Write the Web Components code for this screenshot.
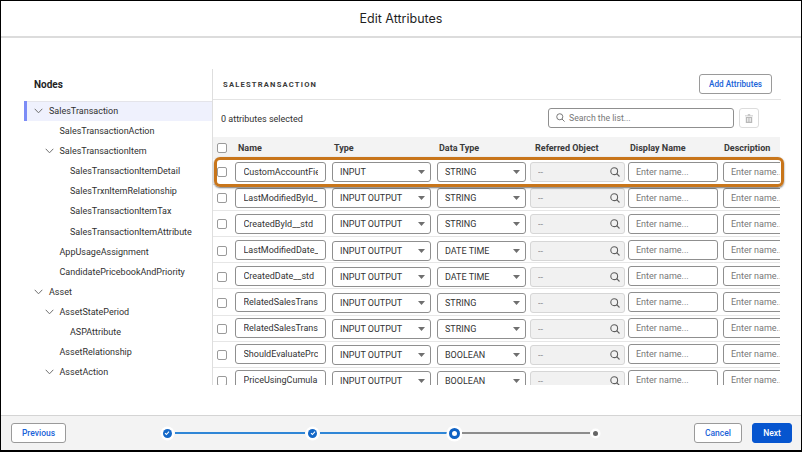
<!DOCTYPE html>
<html lang="en"><head><meta charset="utf-8"><title>Edit Attributes</title>
<style>html,body{margin:0;padding:0;background:#fff}body{font-family:Inter,"Liberation Sans",sans-serif}</style></head>
<body>
<edit-app></edit-app>
<template id="t-app">
<style>
:host{display:flex;flex-direction:column;width:802px;height:452px;box-sizing:border-box;border:solid #000;border-width:1px 1px 2px 1px;background:#fff;color:#2e2e2e;font:9px Roboto,"Liberation Sans",sans-serif;overflow:hidden}
header{height:35px;flex:none;display:flex;align-items:center;justify-content:center;font:12.5px Inter,sans-serif;color:#1f1f1f;border-bottom:2px solid #dcdcdc}
main{flex:1;min-height:0;display:flex;padding:31px 21px 30px 23px}
</style>
<header>Edit Attributes</header>
<main><node-tree></node-tree><attr-panel></attr-panel></main>
<wizard-footer></wizard-footer>
</template>
<template id="t-tree">
<style>
:host{display:block;width:188px;height:316px;flex:none;overflow:hidden}
h2{margin:0;height:32px;padding:10px 0 0 10px;box-sizing:border-box;font-size:10px;font-weight:700;color:#1f1f1f}
</style>
<h2>Nodes</h2><div id="r"></div>
</template>
<template id="t-row">
<style>
:host{display:flex;align-items:center;height:20.08px;box-sizing:border-box;font-size:9px;color:#303030;white-space:nowrap}
:host([selected]){background:#eff1fd;border-left:3px solid #7c8cf6;box-shadow:inset 0 1px 0 #e4e4ea}
svg{width:9px;height:6px;flex:none;fill:none;stroke:#6f6f6f;stroke-width:1}
</style>
<span id="pad"></span><svg id="c" viewBox="0 0 9 6"><path d="M.7.8 4.5 4.8 8.3.8"/></svg><span id="g" style="width:6px;flex:none"></span><slot></slot>
</template>
<template id="t-panel">
<style>
:host{display:flex;flex-direction:column;width:568px;flex:none;border-left:1px solid #dedede;position:relative;height:316px}
.top{height:31px;flex:none;box-sizing:border-box;border-bottom:1px solid #e4e4e4;display:flex;align-items:center;justify-content:space-between;padding:0 9px 0 10px}
.t{font-size:7.6px;font-weight:700;letter-spacing:1.2px;color:#3a3a3a}
.bar{height:37px;flex:none;display:flex;align-items:center;padding:0 0 0 8px;font-size:9px;color:#303030}
.sp{flex:1}
.search{width:186px;height:20px;margin:-2px 5px 0 0;box-sizing:border-box;border:1px solid #8f8f8f;border-radius:3px;display:flex;align-items:center;gap:4px;padding-left:7px;color:#777;font-size:8.7px}
.trash{width:20px;height:20px;margin:-1px 22px 0 0;box-sizing:border-box;border:1px solid #dcdcdc;border-radius:3px;display:flex;align-items:center;justify-content:center}
svg{display:block}
.table{flex:1;min-height:0;overflow:hidden;width:567px}
</style>
<div class="top"><span class="t">SALESTRANSACTION</span><wiz-button style="width:73px">Add Attributes</wiz-button></div>
<div class="bar"><span>0 attributes selected</span><span class="sp"></span>
<div class="search"><svg width="9" height="9" viewBox="0 0 10 10" fill="none" stroke="#6b6b6b" stroke-width="1"><circle cx="4.2" cy="4.2" r="3.4"/><path d="M6.7 6.7 9.5 9.5"/></svg><span>Search the list...</span></div>
<div class="trash"><svg width="8" height="9" viewBox="0 0 8 9" fill="#b9b9b9"><path d="M0 1.4h8v.9H0zM2.8.2h2.4v1H2.8zM.8 2.9h6.4V9H.8z"/><path fill="#fff" d="M2.3 4h.7v3.8h-.7zM3.7 4h.7v3.8h-.7zM5.1 4h.7v3.8h-.7z"/></svg></div></div>
<div class="table" id="tb"></div>
</template>
<template id="t-grid">
<style>
:host{display:grid;grid-template-columns:22px 97px 105px 93px 98px 95px 90px;align-items:center;box-sizing:border-box;height:26.1px;border-bottom:1px solid #e6e6e6;width:600px}
:host([head]){height:22px;background:#f3f3f3;border:0;font-size:9px;font-weight:700;color:#3a3a3a}
.c{width:10px;height:10px;margin:1.5px 0 0 4px;box-sizing:border-box;border:1px solid #9a9a9a;border-radius:2px;background:#fff}
:host([head]) .c{margin-top:0}
::slotted(*){min-width:0}
</style>
<div class="c"></div><slot></slot>
</template>
<template id="t-field">
<style>
:host{display:flex;align-items:center;justify-content:space-between;box-sizing:border-box;height:20px;border:1px solid #8f8f8f;border-radius:3px;padding:0 7.5px;background:#fff;font-size:9px;color:#333;overflow:hidden;white-space:nowrap}
:host([icon]){margin-top:1.5px;padding:0 5px 0 7px}
:host([icon=mag]){padding-right:4px}
:host([off]){background:#f1f1f1;border-color:#d6d6d6;color:#8a8a8a}
:host([ph]){color:#777;padding-left:7px;padding-right:8px}
:host([open]){padding-right:0}
span{overflow:hidden;flex:1;min-width:0}
svg{flex:none;display:block}
</style>
<span><slot></slot></span><span id="i" style="flex:none;overflow:visible"></span>
</template>
<template id="t-btn">
<style>
:host{display:inline-flex;align-items:center;justify-content:center;box-sizing:border-box;height:20px;padding:0;border:1px solid #9a9a9a;border-radius:3px;background:#fff;color:#1a63d8;font-size:8.2px;font-weight:500;white-space:nowrap}
:host([brand]){background:#0655cf;border-color:#0655cf;color:#fff}
</style><slot></slot>
</template>
<template id="t-footer">
<style>
:host{display:flex;align-items:center;flex:none;height:35px;box-sizing:border-box;background:#f3f3f3;border-top:1px solid #d4d4d4;padding:0 9px 0 10px}
wiz-stepper{margin-left:96.5px}
.sp{flex:1}
.gap{width:10px}
wiz-button{font-size:8.5px}
</style>
<wiz-button style="width:55px">Previous</wiz-button><wiz-stepper></wiz-stepper><span class="sp"></span><wiz-button style="width:48px">Cancel</wiz-button><span class="gap"></span><wiz-button brand style="width:40px">Next</wiz-button>
</template>
<template id="t-step">
<style>
:host{display:flex;align-items:center;width:435px}
.d{flex:none;border-radius:50%;box-sizing:border-box;box-shadow:0 0 0 2.5px #fff}
.ok{width:9px;height:9px;background:#1468c8;display:flex;align-items:center;justify-content:center}
.cur{width:11px;height:11px;border:3px solid #0f62c4;background:#fff;margin:0 2px}
.todo{width:5px;height:5px;background:#666}
.l{height:2px;margin:0 3px;background:#2f86d6;flex:none}
.l.g{background:#8c8c8c}
</style>
<span class="d ok"><svg width="6" height="6" viewBox="0 0 6 6" fill="none" stroke="#fff" stroke-width="1.1"><path d="M1 3.2 2.4 4.5 5 1.6"/></svg></span><span class="l" style="width:130.5px"></span>
<span class="d ok"><svg width="6" height="6" viewBox="0 0 6 6" fill="none" stroke="#fff" stroke-width="1.1"><path d="M1 3.2 2.4 4.5 5 1.6"/></svg></span><span class="l" style="width:127px;margin-right:0"></span>
<span class="d cur"></span><span class="l g" style="width:127.5px;margin-left:0"></span><span class="d todo"></span>
</template>
<script>
function sh(el,id){const r=el.attachShadow({mode:'open'});r.appendChild(document.getElementById(id).content.cloneNode(true));return r}
class Simple extends HTMLElement{constructor(){super();sh(this,this.constructor.tpl)}}
class EditApp extends Simple{static tpl='t-app'}
class WizFooter extends Simple{static tpl='t-footer'}
class WizStepper extends Simple{static tpl='t-step'}
class WizButton extends Simple{static tpl='t-btn'}
class TreeRow extends HTMLElement{constructor(){super();this.r=sh(this,'t-row')}
 connectedCallback(){const l=+this.getAttribute('level')||0,k=this.hasAttribute('kids');
  this.r.getElementById('pad').style.cssText='flex:none;width:'+((this.hasAttribute('selected')?7:10)+l*10.5)+'px';
  if(!k){this.r.getElementById('c').style.visibility='hidden'}}}
class NodeTree extends HTMLElement{constructor(){super();const r=sh(this,'t-tree');
 const d=[['SalesTransaction',0,1,1],['SalesTransactionAction',1],['SalesTransactionItem',1,1],['SalesTransactionItemDetail',2],['SalesTrxnItemRelationship',2],['SalesTransactionItemTax',2],['SalesTransactionItemAttribute',2],['AppUsageAssignment',1],['CandidatePricebookAndPriority',1],['Asset',0,1],['AssetStatePeriod',1,1],['ASPAttribute',2],['AssetRelationship',1],['AssetAction',1,1]];
 const h=r.getElementById('r');for(const [t,l,k,s] of d){const e=document.createElement('tree-row');e.textContent=t;e.setAttribute('level',l);if(k)e.setAttribute('kids','');if(s)e.setAttribute('selected','');h.appendChild(e)}}}
class GridRow extends Simple{static tpl='t-grid'}
const caret='<svg width="7" height="4" viewBox="0 0 7 4" fill="#6f6f6f"><path d="M0 0h7L3.5 4z"/></svg>',
 mag='<svg width="10" height="10" viewBox="0 0 10 10" fill="none" stroke="#5f5f5f" stroke-width="1.1"><circle cx="4.2" cy="4.2" r="3.4"/><path d="M6.7 6.7 9.5 9.5"/></svg>';
class AttrField extends HTMLElement{constructor(){super();this.r=sh(this,'t-field')}
 connectedCallback(){const i=this.getAttribute('icon');this.r.getElementById('i').innerHTML=i==='caret'?caret:i==='mag'?mag:'';
  if(this.getAttribute('w'))this.style.width=this.getAttribute('w')+'px'}}
class AttrPanel extends HTMLElement{constructor(){super();const r=sh(this,'t-panel');const tb=r.getElementById('tb');
 const hd=document.createElement('grid-row');hd.setAttribute('head','');
 ['Name','Type','Data Type','Referred Object','Display Name','Description'].forEach((t,i)=>{const s=document.createElement('span');s.textContent=t;s.style.paddingLeft=(i==0?3:i==1?2:i==2?2:i==3?5:i==4?2:1)+'px';hd.appendChild(s)});tb.appendChild(hd);
 const rows=[['CustomAccountFie','INPUT','STRING'],['LastModifiedById_','INPUT OUTPUT','STRING'],['CreatedById__std','INPUT OUTPUT','STRING'],['LastModifiedDate_','INPUT OUTPUT','DATE TIME'],['CreatedDate__std','INPUT OUTPUT','DATE TIME'],['RelatedSalesTrans','INPUT OUTPUT','STRING'],['RelatedSalesTrans','INPUT OUTPUT','STRING'],['ShouldEvaluatePrc','INPUT OUTPUT','BOOLEAN'],['PriceUsingCumula','INPUT OUTPUT','BOOLEAN']];
 for(const [n,t,d] of rows){const g=document.createElement('grid-row');
  const f=(txt,w,ic,extra,x2)=>{const a=document.createElement('attr-field');a.textContent=txt;a.setAttribute('w',w);if(ic)a.setAttribute('icon',ic);if(extra)a.setAttribute(extra,'');if(x2)a.setAttribute(x2,'');g.appendChild(a)};
  f(n,91);f(t,99,'caret');f(d,89,'caret');f('--',95,'mag','off');f('Enter name...',90,null,'ph');f('Enter name..',64,null,'ph','open');tb.appendChild(g)}
 const hl=document.createElement('div');hl.style.cssText='position:absolute;left:1px;top:88px;width:570px;height:30px;box-sizing:border-box;border:3px solid #c8751a;border-radius:6px;box-shadow:0 1px 2px rgba(0,0,0,.55);pointer-events:none';r.appendChild(hl);
 }}
const defs={'edit-app':EditApp,'wizard-footer':WizFooter,'wiz-stepper':WizStepper,'wiz-button':WizButton,'tree-row':TreeRow,'node-tree':NodeTree,'grid-row':GridRow,'attr-field':AttrField,'attr-panel':AttrPanel};
for(const k of ['wiz-button','wiz-stepper','wizard-footer','tree-row','node-tree','grid-row','attr-field','attr-panel','edit-app'])customElements.define(k,defs[k]);
</script>
</body></html>
